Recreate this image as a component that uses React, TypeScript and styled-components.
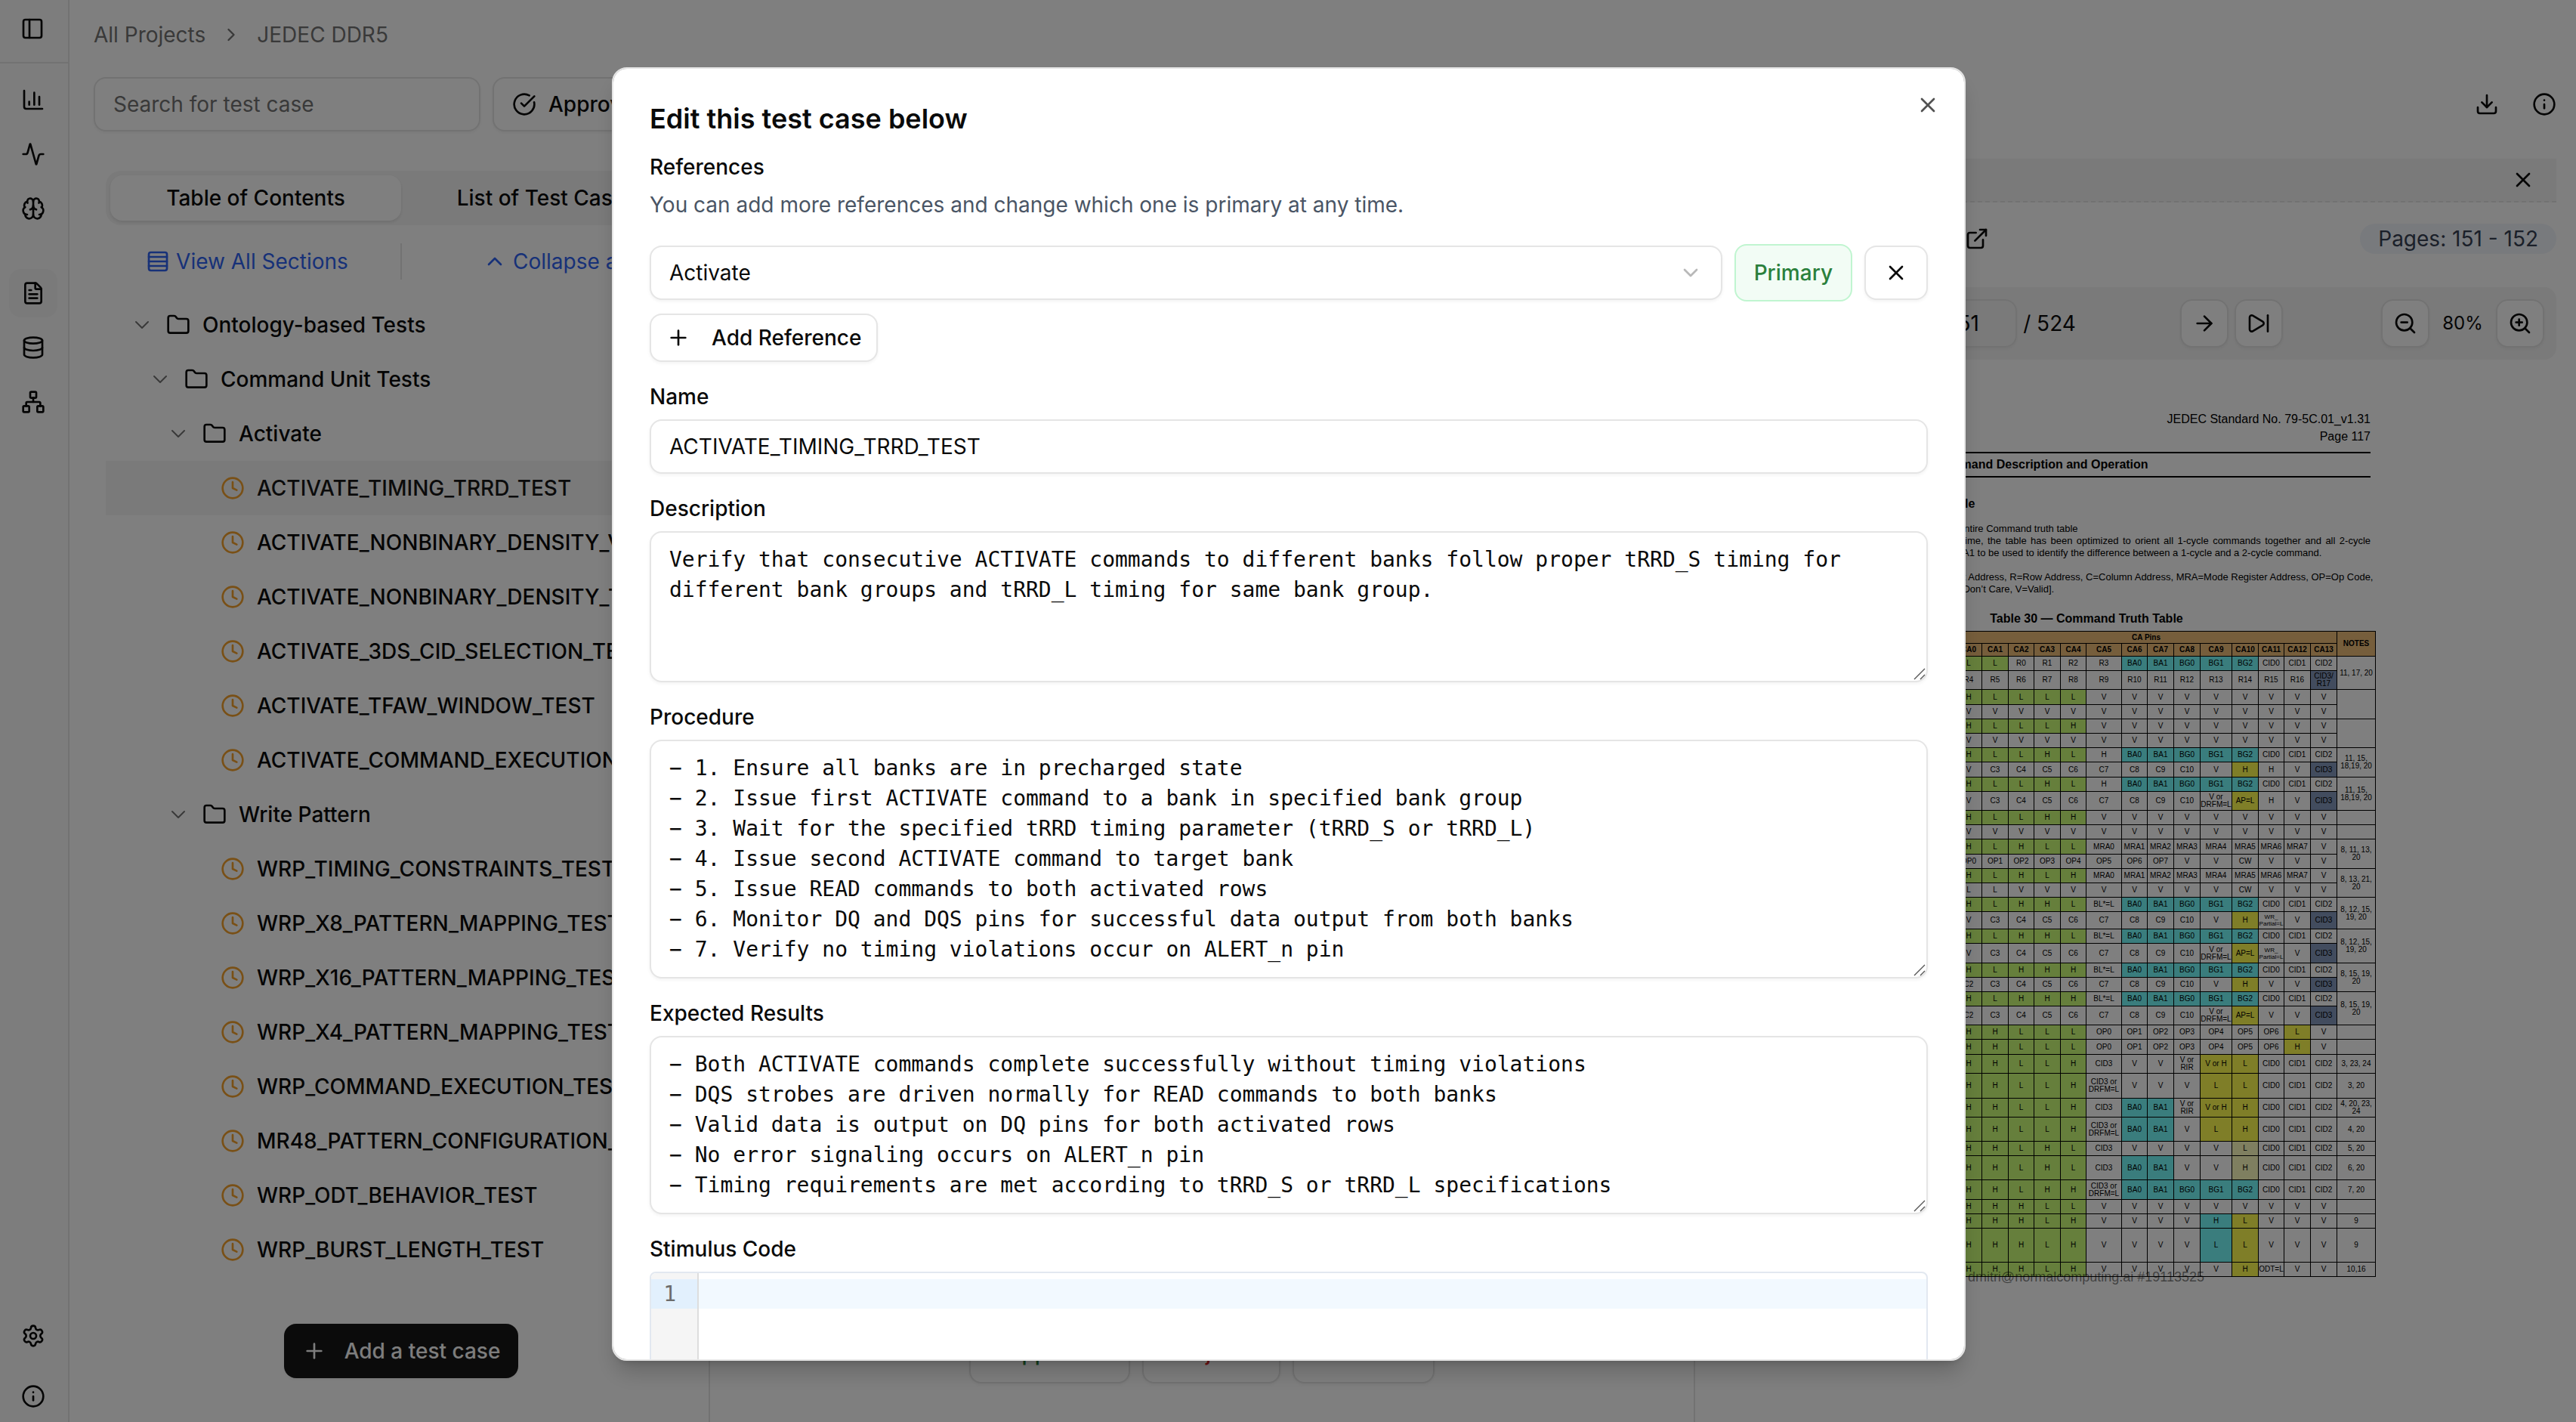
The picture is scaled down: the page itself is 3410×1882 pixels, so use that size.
import React from 'react';
import styled, { createGlobalStyle, css } from 'styled-components';
import {
  Activity,
  ArrowLeft,
  ArrowRight,
  Brain,
  ChartColumn,
  ChevronDown,
  ChevronRight,
  ChevronUp,
  CircleCheckBig,
  Clock,
  Database,
  Download,
  ExternalLink,
  FileText,
  Folder,
  Info,
  Network,
  PanelLeft,
  Plus,
  Rows4,
  Settings,
  SkipBack,
  SkipForward,
  X,
  ZoomIn,
  ZoomOut,
} from 'lucide-react';

const sans = "Inter, 'Liberation Sans', sans-serif";
const mono = "'DejaVu Sans Mono', monospace";
const arial = "'Liberation Sans', Arial, sans-serif";

const GlobalStyle = createGlobalStyle`
  *, *::before, *::after { box-sizing: border-box; }
  body { margin: 0; background: #fff; color: #0a0a0a; font: 400 28px/40px ${sans}; }
  button, input, select, textarea { font: inherit; color: inherit; margin: 0; }
  button { cursor: pointer; }
  a { color: inherit; text-decoration: none; }
  p, h1, h2, h3, ul { margin: 0; padding: 0; }
  svg { flex: none; }
`;

const border = '2px solid #e5e5e5';
const softShadow = '0 2px 4px rgba(0, 0, 0, 0.05)';

/* ---------- application shell ---------- */

const Shell = styled.div`
  display: flex;
  height: 100vh;
  overflow: hidden;
`;

const Sidebar = styled.nav`
  display: flex;
  flex-direction: column;
  flex: none;
  width: 92px;
  background: #fafafa;
  border-right: ${border};
`;

const SidebarTop = styled.div`
  display: flex;
  align-items: center;
  justify-content: center;
  height: 84px;
  padding: 0 4px 6px 0;
  border-bottom: ${border};
`;

const SidebarGroup = styled.div<{ $gap?: number }>`
  display: flex;
  flex-direction: column;
  align-items: center;
  gap: ${(p) => p.$gap ?? 8}px;
`;

const SidebarBody = styled.div`
  display: flex;
  flex-direction: column;
  flex: 1;
  gap: 48px;
  padding: 16px 2px 2px 0;
`;

const SidebarFoot = styled(SidebarGroup)`
  margin-top: auto;
`;

const IconButton = styled.button<{ $active?: boolean; $size?: number }>`
  display: flex;
  align-items: center;
  justify-content: center;
  width: ${(p) => p.$size ?? 64}px;
  height: ${(p) => p.$size ?? 64}px;
  padding: 0;
  border: 0;
  border-radius: 16px;
  background: ${(p) => (p.$active ? '#f4f4f5' : 'transparent')};
`;

const Main = styled.main`
  display: flex;
  flex-direction: column;
  flex: 1;
  min-width: 0;
`;

const Breadcrumb = styled.nav`
  display: flex;
  align-items: center;
  gap: 20px;
  padding: 26px 32px 0;
  color: #737373;
`;

const TopBar = styled.div`
  display: flex;
  align-items: center;
  gap: 16px;
  padding: 36px 26px 16px 32px;
`;

const SearchInput = styled.input`
  width: 512px;
  height: 72px;
  padding: 0 24px;
  border: ${border};
  border-radius: 16px;
  background: transparent;
  box-shadow: ${softShadow};
  &::placeholder { color: #737373; opacity: 1; }
`;

const TopActions = styled.div`
  display: flex;
  gap: 44px;
  margin-left: auto;
`;

type Tone = 'outline' | 'dark' | 'green' | 'red';

const Button = styled.button<{ $tone?: Tone; $gap?: number; $pad?: number; $height?: number }>`
  display: inline-flex;
  align-items: center;
  gap: ${(p) => p.$gap ?? 16}px;
  height: ${(p) => p.$height ?? 72}px;
  padding: 0 ${(p) => p.$pad ?? 24}px;
  border: ${border};
  border-radius: 16px;
  background: #fff;
  box-shadow: ${softShadow};
  font-weight: 500;
  white-space: nowrap;
  ${(p) => p.$tone === 'dark' && css`background: #171717; color: #fafafa; border: 0;`}
  ${(p) => p.$tone === 'green' && css`color: #2b803c;`}
  ${(p) => p.$tone === 'red' && css`color: #dc2626;`}
`;

const Columns = styled.div`
  display: grid;
  grid-template-columns: 848fr 1302fr 1168fr;
  flex: 1;
  min-height: 0;
`;

/* ---------- left column ---------- */

const Contents = styled.section`
  display: flex;
  flex-direction: column;
  min-width: 0;
  padding: 36px 16px 58px 48px;
  border-right: ${border};
`;

const Tabs = styled.div`
  display: grid;
  grid-template-columns: 1fr 1fr;
  height: 72px;
  padding: 6px;
  border-radius: 20px;
  background: #f5f5f5;
`;

const Tab = styled.button<{ $active?: boolean }>`
  border: 0;
  border-radius: 16px;
  background: ${(p) => (p.$active ? '#fff' : 'transparent')};
  box-shadow: ${(p) => (p.$active ? '0 2px 4px rgba(0, 0, 0, 0.1)' : 'none')};
  font-weight: 500;
`;

const TreeActions = styled.div`
  display: flex;
  height: 48px;
  margin: 24px 0;
`;

const TreeAction = styled.div<{ $last?: boolean }>`
  display: flex;
  align-items: center;
  justify-content: center;
  flex: 1;
  padding: ${(p) => (p.$last ? '0 0 0 16px' : '0 16px 0 0')};
  border-left: ${(p) => (p.$last ? border : 0)};
`;

const TextLink = styled.a`
  display: flex;
  align-items: center;
  gap: 8px;
  color: #2f63f0;
`;

const Tree = styled.ul`
  flex: 1;
  min-height: 0;
  list-style: none;
`;

const TreeRow = styled.li<{ $level: number; $active?: boolean }>`
  display: flex;
  align-items: center;
  gap: 16px;
  height: 72px;
  padding-left: ${(p) => 32 + p.$level * 24}px;
  background: ${(p) => (p.$active ? '#f5f5f5' : 'transparent')};
  color: ${(p) => (p.$active ? '#171717' : '#0a0a0a')};
  font-weight: 500;
  white-space: nowrap;
`;

const TreeToggle = styled.span`
  display: flex;
  flex: none;
  width: 32px;
  color: #737373;
`;

const ContentsFoot = styled.div`
  display: flex;
  justify-content: center;
`;

/* ---------- middle column ---------- */

const Detail = styled.section`
  display: flex;
  align-items: flex-end;
  justify-content: center;
  gap: 16px;
  padding-bottom: 51px;
`;

/* ---------- right column ---------- */

const Viewer = styled.section`
  min-width: 0;
  padding: 20px 26px 0 24px;
  border-left: ${border};
`;

const ViewerBar = styled.div`
  display: flex;
  align-items: center;
  justify-content: flex-end;
  height: 58px;
  padding-right: 28px;
  border-bottom: 2px dashed #e5e5e5;
  background: #f5f5f5;
`;

const ViewerMeta = styled.div`
  display: flex;
  align-items: center;
  justify-content: flex-end;
  height: 112px;
  padding-bottom: 16px;
`;

const SourceLink = styled.a`
  display: flex;
  width: 523px;
`;

const Pill = styled.span`
  padding: 0 24px;
  border-radius: 20px;
  background: #f0f4fb;
  color: #364153;
`;

const ViewerTools = styled.div`
  display: flex;
  align-items: center;
  gap: 130px;
  height: 96px;
  padding: 0 16px;
  border-radius: 16px;
  background: #f5f5f5;
`;

const PageNav = styled.div`
  display: flex;
  flex: 1;
  justify-content: space-between;
`;

const ToolGroup = styled.div`
  display: flex;
  align-items: center;
  gap: 8px;
`;

const ToolButton = styled(IconButton)`
  border: ${border};
  background: #fff;
  box-shadow: ${softShadow};
`;

const PageInput = styled.input`
  width: 112px;
  height: 64px;
  padding: 0 20px;
  border: ${border};
  border-radius: 16px;
  background: transparent;
  box-shadow: ${softShadow};
`;

const ZoomLevel = styled.span`
  width: 72px;
  font-size: 24px;
  text-align: center;
`;

/* ---------- PDF page ---------- */

const Sheet = styled.article`
  position: relative;
  width: 980px;
  margin: 0 auto;
  padding-top: 67px;
  background: #fff;
  color: #000;
  font: 400 16px/23px ${arial};
`;

const SheetText = styled.div`
  padding: 0 178px 0 84px;
`;

const SheetHead = styled.div`
  text-align: right;
`;

const SheetTitle = styled.h2`
  display: flex;
  gap: 20px;
  margin: 9px 0 23px;
  border: solid #000;
  border-width: 2px 0;
  font-size: 16px;
  line-height: 30px;
`;

const SheetHeading = styled.h3`
  margin-bottom: 14px;
  font-size: 16px;
`;

const SheetPara = styled.p`
  margin: 0 0 16px -4px;
  font-size: 13px;
  line-height: 16px;
  white-space: nowrap;
`;

const SheetLine = styled.span<{ $justify?: boolean }>`
  display: block;
  ${(p) => p.$justify && css`white-space: normal; text-align-last: justify;`}
`;

const PinTable = styled.table`
  width: 766px;
  margin-left: 43px;
  border-collapse: collapse;
  table-layout: fixed;
  font-size: 10px;
  line-height: 10px;
  text-align: center;
`;

const Caption = styled.caption`
  padding: 3px 0 5px;
  font-size: 16px;
  font-weight: 700;
  line-height: 23px;
`;

const fills = {
  g: '#ccff78',
  c: '#74fbfb',
  y: '#fffc50',
  p: '#ffffc0',
  n: '#8498bc',
  o: '#ecbc78',
};
type Fill = keyof typeof fills;

const PinCell = styled.td<{ $fill?: Fill; $tiny?: boolean }>`
  padding: 0;
  border: 1px solid #000;
  background: ${(p) => (p.$fill ? fills[p.$fill] : 'transparent')};
  white-space: pre;
  ${(p) => p.$tiny && css`font-size: 8px; line-height: 9px;`}
`;

const PinHead = styled.th`
  padding: 0;
  border: 1px solid #000;
  background: ${fills.o};
`;

const Watermark = styled.div`
  position: absolute;
  right: 398px;
  bottom: -12px;
  color: rgba(0, 0, 0, 0.5);
  font-size: 18px;
`;

/* ---------- dialog ---------- */

const Backdrop = styled.div`
  position: fixed;
  inset: 0;
  display: flex;
  justify-content: center;
  padding: 89px 0 81px 2px;
  background: rgba(0, 0, 0, 0.5);
`;

const Dialog = styled.div`
  position: relative;
  width: 100%;
  max-width: 1792px;
  padding: 48px;
  overflow-y: auto;
  scrollbar-width: none;
  border: ${border};
  border-radius: 20px;
  background: #fff;
  box-shadow: 0 20px 30px -6px rgba(0, 0, 0, 0.2), 0 8px 12px -8px rgba(0, 0, 0, 0.2);
`;

const DialogClose = styled.button`
  position: absolute;
  top: 32px;
  right: 32px;
  display: flex;
  padding: 0;
  border: 0;
  background: none;
  opacity: 0.7;
`;

const DialogTitle = styled.h1`
  font-size: 36px;
  font-weight: 600;
  line-height: 36px;
`;

const Form = styled.form`
  display: flex;
  flex-direction: column;
  gap: 32px;
  margin-top: 32px;
`;

const Field = styled.div`
  display: flex;
  flex-direction: column;
  gap: 16px;
`;

const Label = styled.label`
  font-weight: 500;
  line-height: 28px;
`;

const Hint = styled.p`
  color: #4a5565;
`;

const References = styled.div`
  display: flex;
  flex-direction: column;
  align-items: flex-start;
  gap: 16px;
`;

const ReferenceRow = styled.div`
  display: flex;
  align-items: center;
  gap: 16px;
  width: 100%;
`;

const control = css`
  width: 100%;
  border: ${border};
  border-radius: 16px;
  background: #fff;
  box-shadow: ${softShadow};
  outline: none;
`;

const SelectWrap = styled.div`
  position: relative;
  flex: 1;
`;

const Select = styled.select`
  ${control}
  display: block;
  appearance: none;
  height: 72px;
  padding: 0 24px;
`;

const SelectArrow = styled(ChevronDown)`
  position: absolute;
  top: 20px;
  right: 26px;
  color: #737373;
  opacity: 0.5;
  pointer-events: none;
`;

const PrimaryBadge = styled.span`
  padding: 16px 24px;
  border: 2px solid #c0f5d0;
  border-radius: 16px;
  background: #f2fcf5;
  color: #2b803c;
  font-weight: 500;
`;

const TextInput = styled.input`
  ${control}
  height: 72px;
  padding: 0 24px;
`;

const AreaWrap = styled.div`
  position: relative;
  display: flex;
`;

const Area = styled.textarea<{ $minHeight?: number }>`
  ${control}
  display: block;
  min-height: ${(p) => p.$minHeight ?? 0}px;
  padding: 16px 24px;
  resize: none;
  overflow: hidden;
  font-family: ${mono};
`;

const Grip = styled.svg`
  position: absolute;
  right: 3px;
  bottom: 3px;
  width: 16px;
  height: 16px;
  pointer-events: none;
`;

const Editor = styled.div`
  display: grid;
  grid-template-columns: 63px 1fr;
  height: 400px;
  border: 2px solid #e2e8f0;
  border-radius: 8px;
  overflow: hidden;
  font-family: ${mono};
`;

const Gutter = styled.div`
  padding-top: 8px;
  border-right: 2px solid #ddd;
  background: #f5f5f5;
  color: #6c6c6c;
  line-height: 39px;
  text-align: right;
`;

const GutterLine = styled.div`
  padding-right: 28px;
  background: #e2f0fd;
`;

const CodeInput = styled.textarea`
  width: 100%;
  margin-top: 8px;
  padding: 0 12px;
  border: 0;
  outline: none;
  resize: none;
  background: linear-gradient(#f2f9ff, #f2f9ff) 0 0 / 100% 39px no-repeat;
  line-height: 39px;
`;

/* ---------- data ---------- */

type Node = { level: number; label: string; folder?: boolean; active?: boolean };

const tree: Node[] = [
  { level: 0, label: 'Ontology-based Tests', folder: true },
  { level: 1, label: 'Command Unit Tests', folder: true },
  { level: 2, label: 'Activate', folder: true },
  { level: 3, label: 'ACTIVATE_TIMING_TRRD_TEST', active: true },
  { level: 3, label: 'ACTIVATE_NONBINARY_DENSITY_V_TEST' },
  { level: 3, label: 'ACTIVATE_NONBINARY_DENSITY_TEST' },
  { level: 3, label: 'ACTIVATE_3DS_CID_SELECTION_TEST' },
  { level: 3, label: 'ACTIVATE_TFAW_WINDOW_TEST' },
  { level: 3, label: 'ACTIVATE_COMMAND_EXECUTION_TEST' },
  { level: 2, label: 'Write Pattern', folder: true },
  { level: 3, label: 'WRP_TIMING_CONSTRAINTS_TEST' },
  { level: 3, label: 'WRP_X8_PATTERN_MAPPING_TEST' },
  { level: 3, label: 'WRP_X16_PATTERN_MAPPING_TEST' },
  { level: 3, label: 'WRP_X4_PATTERN_MAPPING_TEST' },
  { level: 3, label: 'WRP_COMMAND_EXECUTION_TEST' },
  { level: 3, label: 'MR48_PATTERN_CONFIGURATION_TEST' },
  { level: 3, label: 'WRP_ODT_BEHAVIOR_TEST' },
  { level: 3, label: 'WRP_BURST_LENGTH_TEST' },
];

const description =
  'Verify that consecutive ACTIVATE commands to different banks follow proper tRRD_S timing for different bank groups and tRRD_L timing for same bank group.';

const procedure = [
  '− 1. Ensure all banks are in precharged state',
  '− 2. Issue first ACTIVATE command to a bank in specified bank group',
  '− 3. Wait for the specified tRRD timing parameter (tRRD_S or tRRD_L)',
  '− 4. Issue second ACTIVATE command to target bank',
  '− 5. Issue READ commands to both activated rows',
  '− 6. Monitor DQ and DQS pins for successful data output from both banks',
  '− 7. Verify no timing violations occur on ALERT_n pin',
];

const expected = [
  '− Both ACTIVATE commands complete successfully without timing violations',
  '− DQS strobes are driven normally for READ commands to both banks',
  '− Valid data is output on DQ pins for both activated rows',
  '− No error signaling occurs on ALERT_n pin',
  '− Timing requirements are met according to tRRD_S or tRRD_L specifications',
];

const columnWidths = [120, 54, 35, 35, 35, 34, 35, 34, 47, 34, 35, 35, 42, 35, 34, 35, 35, 51];

// Cells are separated by "|"; a trailing "~x" picks the fill, "/" breaks the line.
const V9 = 'V|V|V|V|V|V|V|V|V';
const V14 = 'V|V|V|V|V|' + V9;
const bank = 'BA0~c|BA1~c|BG0~c|BG1~c|BG2~c|CID0|CID1|CID2';
const mra = 'MRA0|MRA1|MRA2|MRA3|MRA4|MRA5|MRA6|MRA7|V';
const cols = 'C3|C4|C5|C6|C7|C8|C9|C10';
const cid = 'CID0|CID1|CID2';
const lead = (s: string) => s.split('').map((c) => c + '~g').join('|') + '|';

type PinRow = { h: number; name: string; cells: string; note?: string; span?: number };

const pinRows: PinRow[] = [
  { h: 19, name: 'Activate', cells: 'L~g|L~g|R0|R1|R2|R3|' + bank, note: '11, 17, 20', span: 2 },
  { h: 25, name: '', cells: 'R4|R5|R6|R7|R8|R9|R10|R11|R12|R13|R14|R15|R16|CID3//R17~n' },
  { h: 20, name: 'RFU', cells: lead('HLLLL') + V9, note: '', span: 2 },
  { h: 19, name: '', cells: V14 },
  { h: 19, name: 'RFU', cells: lead('HLLLH') + V9, note: '', span: 2 },
  { h: 19, name: '', cells: V14 },
  { h: 19, name: 'Write Pattern', cells: lead('HLLHL') + 'H|' + bank, note: '11, 15,/18,19, 20', span: 2 },
  { h: 20, name: '', cells: 'V|' + cols + '|V|H~y|H|V|CID3~n' },
  { h: 19, name: 'Write Pattern w/ AP', cells: lead('HLLHL') + 'H|' + bank, note: '11, 15,/18,19, 20', span: 2 },
  { h: 25, name: '', cells: 'V|' + cols + '|V or/DRFM=L|AP=L~y|H|V|CID3~n' },
  { h: 19, name: 'RFU', cells: lead('HLLHH') + V9, note: '' },
  { h: 19, name: '', cells: V14, note: '' },
  { h: 20, name: 'Mode Register Write', cells: lead('HLHLL') + mra, note: '8, 11, 13,/20', span: 2 },
  { h: 19, name: '', cells: 'OP0|OP1|OP2|OP3|OP4|OP5|OP6|OP7|V|V|CW|V|V|V' },
  { h: 19, name: 'Mode Register Read', cells: lead('HLHLH') + mra, note: '8, 13, 21,/20', span: 2 },
  { h: 19, name: '', cells: 'L|L|V|V|V|V|V|V|V|V|CW|V|V|V' },
  { h: 19, name: 'Write', cells: lead('HLHHL') + 'BL*=L|' + bank, note: '8, 12, 15,/19, 20', span: 2 },
  { h: 23, name: '', cells: 'V|' + cols + '|V|H~y|WR_/Partial=L~t|V|CID3~n' },
  { h: 19, name: 'Write w/ AP', cells: lead('HLHHL') + 'BL*=L|' + bank, note: '8, 12, 15,/19, 20', span: 2 },
  { h: 26, name: '', cells: 'V|' + cols + '|V or/DRFM=L|AP=L~y|WR_/Partial=L~t|V|CID3~n' },
  { h: 19, name: 'Read', cells: lead('HLHHH') + 'BL*=L|' + bank, note: '8, 15, 19,/20', span: 2 },
  { h: 19, name: '', cells: 'C2|' + cols + '|V|H~y|V|V|CID3~n' },
  { h: 19, name: 'Read w/ AP', cells: lead('HLHHH') + 'BL*=L|' + bank, note: '8, 15, 19,/20', span: 2 },
  { h: 25, name: '', cells: 'C2|' + cols + '|V or/DRFM=L|AP=L~y|V|V|CID3~n' },
  { h: 19, name: 'VrefCA', cells: lead('HHLLL') + 'OP0|OP1|OP2|OP3|OP4|OP5|OP6|L~y|V', note: '' },
  { h: 20, name: 'VrefCS', cells: lead('HHLLL') + 'OP0|OP1|OP2|OP3|OP4|OP5|OP6|H~y|V', note: '' },
  { h: 25, name: 'Refresh All', cells: lead('HHLLH') + 'CID3|V|V|V or/RIR|V or H~y|L~y|' + cid, note: '3, 23, 24' },
  { h: 33, name: 'RFM All', cells: lead('HHLLH') + 'CID3 or/DRFM=L|V|V|V|L~y|L~y|' + cid, note: '3, 20' },
  { h: 25, name: 'Refresh SB', cells: lead('HHLLH') + 'CID3|BA0~c|BA1~c|V or/RIR|V or H~y|H~y|' + cid, note: '4, 20, 23,/24' },
  { h: 32, name: 'RFM SB', cells: lead('HHLLH') + 'CID3 or/DRFM=L|BA0~c|BA1~c|V|L~y|H~y|' + cid, note: '4, 20' },
  { h: 19, name: 'Precharge All', cells: lead('HHLHL') + 'CID3|V|V|V|V|L~p|' + cid, note: '5, 20' },
  { h: 32, name: 'Precharge SB', cells: lead('HHLHL') + 'CID3|BA0~c|BA1~c|V|V|H~p|' + cid, note: '6, 20' },
  { h: 26, name: 'Precharge', cells: lead('HHLHH') + 'CID3 or/DRFM=L|' + bank, note: '7, 20' },
  { h: 19, name: 'RFU', cells: lead('HHHLL') + V9, note: '' },
  { h: 19, name: 'Self Refresh Entry', cells: lead('HHHLH') + 'V|V|V|V|H~c|L~y|V|V|V', note: '9' },
  { h: 45, name: 'Self Refresh Entry', cells: lead('HHHLH') + 'V|V|V|V|L~c|L~y|V|V|V', note: '9' },
  { h: 19, name: 'Power Down Entry', cells: lead('HHHLH') + 'V|V|V|V|V|H~y|ODT=L|V|V', note: '10,16' },
];

const breakLines = (s: string) => (s.includes('//') ? s.replace('//', '/\n') : s.replace('/', '\n'));

/* ---------- parts ---------- */

function PinTableView() {
  return (
    <PinTable>
      <Caption>Table 30 — Command Truth Table</Caption>
      <colgroup>
        {columnWidths.map((w, i) => (
          <col key={i} style={{ width: w }} />
        ))}
      </colgroup>
      <thead>
        <tr style={{ height: 16 }}>
          <PinHead rowSpan={2}>Function</PinHead>
          <PinHead rowSpan={2}>Abbr.</PinHead>
          <PinHead rowSpan={2}>CS_n</PinHead>
          <PinHead colSpan={14}>CA Pins</PinHead>
          <PinHead rowSpan={2}>NOTES</PinHead>
        </tr>
        <tr style={{ height: 17 }}>
          {Array.from({ length: 14 }, (_, i) => (
            <PinHead key={i}>CA{i}</PinHead>
          ))}
        </tr>
      </thead>
      <tbody>
        {pinRows.map((row, r) => (
          <tr key={r} style={{ height: row.h }}>
            <PinCell>{row.name}</PinCell>
            <PinCell />
            <PinCell>{row.name ? 'L' : 'H'}</PinCell>
            {row.cells.split('|').map((cell, c) => {
              const [text, flag] = cell.split('~');
              return (
                <PinCell key={c} $fill={flag && flag !== 't' ? (flag as Fill) : undefined} $tiny={flag === 't'}>
                  {breakLines(text)}
                </PinCell>
              );
            })}
            {row.note !== undefined && <PinCell rowSpan={row.span ?? 1}>{breakLines(row.note)}</PinCell>}
          </tr>
        ))}
      </tbody>
    </PinTable>
  );
}

function AreaField({ id, label, value, rows, minHeight }: {
  id: string;
  label: string;
  value: string;
  rows: number;
  minHeight?: number;
}) {
  return (
    <Field>
      <Label htmlFor={id}>{label}</Label>
      <AreaWrap>
        <Area id={id} rows={rows} defaultValue={value} $minHeight={minHeight} spellCheck={false} />
        <Grip viewBox="0 0 16 16" fill="none" stroke="#555" strokeWidth="1.4">
          <path d="M1 15 15 1M9 15l6-6" />
        </Grip>
      </AreaWrap>
    </Field>
  );
}

export default function App() {
  return (
    <>
      <GlobalStyle />
      <Shell>
        <Sidebar aria-label="Primary">
          <SidebarTop>
            <IconButton aria-label="Toggle sidebar"><PanelLeft size={32} /></IconButton>
          </SidebarTop>
          <SidebarBody>
            <SidebarGroup>
              <IconButton aria-label="Dashboard"><ChartColumn size={32} /></IconButton>
              <IconButton aria-label="Activity"><Activity size={32} /></IconButton>
              <IconButton aria-label="Models"><Brain size={32} /></IconButton>
            </SidebarGroup>
            <SidebarGroup>
              <IconButton aria-label="Test plan" $active><FileText size={32} /></IconButton>
              <IconButton aria-label="Data"><Database size={32} /></IconButton>
              <IconButton aria-label="Graph"><Network size={32} /></IconButton>
            </SidebarGroup>
            <SidebarFoot $gap={16}>
              <IconButton aria-label="Settings"><Settings size={32} /></IconButton>
              <IconButton aria-label="About"><Info size={32} /></IconButton>
            </SidebarFoot>
          </SidebarBody>
        </Sidebar>

        <Main>
          <Breadcrumb aria-label="Breadcrumb">
            <a href="#projects">All Projects</a>
            <ChevronRight size={28} />
            <a href="#ddr5">JEDEC DDR5</a>
          </Breadcrumb>

          <TopBar>
            <SearchInput type="search" placeholder="Search for test case" aria-label="Search for test case" />
            <Button><CircleCheckBig size={32} />Approve All</Button>
            <TopActions>
              <IconButton $size={32} aria-label="Download"><Download size={32} /></IconButton>
              <IconButton $size={32} aria-label="Information"><Info size={32} /></IconButton>
            </TopActions>
          </TopBar>

          <Columns>
            <Contents>
              <Tabs role="tablist">
                <Tab role="tab" aria-selected $active>Table of Contents</Tab>
                <Tab role="tab">List of Test Cases</Tab>
              </Tabs>
              <TreeActions>
                <TreeAction>
                  <TextLink href="#sections"><Rows4 size={32} />View All Sections</TextLink>
                </TreeAction>
                <TreeAction $last>
                  <TextLink href="#collapse"><ChevronUp size={32} />Collapse all</TextLink>
                </TreeAction>
              </TreeActions>
              <Tree>
                {tree.map((node) => (
                  <TreeRow key={node.label} $level={node.level} $active={node.active}>
                    <TreeToggle>{node.folder && <ChevronDown size={32} strokeWidth={1.5} />}</TreeToggle>
                    {node.folder ? <Folder size={32} /> : <Clock size={32} color="#f2a02c" />}
                    {node.label}
                  </TreeRow>
                ))}
              </Tree>
              <ContentsFoot>
                <Button $tone="dark" $gap={24}><Plus size={32} />Add a test case</Button>
              </ContentsFoot>
            </Contents>

            <Detail>
              <Button $tone="green" $pad={48} $height={80}>Approve</Button>
              <Button $tone="red" $pad={48} $height={80}>Reject</Button>
              <Button $pad={48} $height={80}>Revise</Button>
            </Detail>

            <Viewer>
              <ViewerBar>
                <IconButton $size={32} aria-label="Close viewer"><X size={32} /></IconButton>
              </ViewerBar>
              <ViewerMeta>
                <SourceLink href="#source" aria-label="Open source"><ExternalLink size={32} /></SourceLink>
                <Pill>Pages: 151 - 152</Pill>
              </ViewerMeta>
              <ViewerTools>
                <PageNav>
                  <ToolGroup>
                    <ToolButton aria-label="First page"><SkipBack size={32} /></ToolButton>
                    <ToolButton aria-label="Previous page"><ArrowLeft size={32} /></ToolButton>
                  </ToolGroup>
                  <ToolGroup>
                    <PageInput defaultValue="151" aria-label="Page" />
                    <span>/ 524</span>
                  </ToolGroup>
                  <ToolGroup>
                    <ToolButton aria-label="Next page"><ArrowRight size={32} /></ToolButton>
                    <ToolButton aria-label="Last page"><SkipForward size={32} /></ToolButton>
                  </ToolGroup>
                </PageNav>
                <ToolGroup>
                  <ToolButton aria-label="Zoom out"><ZoomOut size={32} /></ToolButton>
                  <ZoomLevel>80%</ZoomLevel>
                  <ToolButton aria-label="Zoom in"><ZoomIn size={32} /></ToolButton>
                </ToolGroup>
              </ViewerTools>
              <Sheet>
                <SheetText>
                  <SheetHead>
                    <div>JEDEC Standard No. 79-5C.01_v1.31</div>
                    <div>Page 117</div>
                  </SheetHead>
                  <SheetTitle><span>4</span>DDR5 SDRAM Command Description and Operation</SheetTitle>
                  <SheetHeading>4.1 Command Truth Table</SheetHeading>
                  <SheetPara>
                    <SheetLine>Notes 1, 2 and 13 apply to the entire Command truth table</SheetLine>
                    <SheetLine $justify>
                      To improve command decode time, the table has been optimized to orient all 1-cycle commands together and all 2-cycle
                    </SheetLine>
                    <SheetLine>
                      commands together; allowing CA1 to be used to identify the difference between a 1-cycle and a 2-cycle command.
                    </SheetLine>
                  </SheetPara>
                  <SheetPara>
                    <SheetLine>
                      [BG=Bank Group, and BA=Bank Address, R=Row Address, C=Column Address, MRA=Mode Register Address, OP=Op Code,
                    </SheetLine>
                    <SheetLine>CID=Chip ID, CW = Control, X=Don’t Care, V=Valid].</SheetLine>
                  </SheetPara>
                </SheetText>
                <PinTableView />
                <Watermark>dmitri@normalcomputing.ai #19113525</Watermark>
              </Sheet>
            </Viewer>
          </Columns>
        </Main>
      </Shell>

      <Backdrop>
        <Dialog role="dialog" aria-modal="true" aria-labelledby="dialog-title">
          <DialogClose type="button" aria-label="Close"><X size={32} /></DialogClose>
          <DialogTitle id="dialog-title">Edit this test case below</DialogTitle>
          <Form onSubmit={(e) => e.preventDefault()}>
            <Field>
              <Label htmlFor="reference">References</Label>
              <Hint>You can add more references and change which one is primary at any time.</Hint>
            </Field>
            <References>
              <ReferenceRow>
                <SelectWrap>
                  <Select id="reference" defaultValue="Activate">
                    <option>Activate</option>
                    <option>Write Pattern</option>
                  </Select>
                  <SelectArrow size={32} />
                </SelectWrap>
                <PrimaryBadge>Primary</PrimaryBadge>
                <Button type="button" aria-label="Remove reference"><X size={32} /></Button>
              </ReferenceRow>
              <Button type="button" $gap={28} $pad={20} $height={64}><Plus size={32} />Add Reference</Button>
            </References>
            <Field>
              <Label htmlFor="name">Name</Label>
              <TextInput id="name" defaultValue="ACTIVATE_TIMING_TRRD_TEST" />
            </Field>
            <AreaField id="description" label="Description" value={description} rows={2} minHeight={200} />
            <AreaField id="procedure" label="Procedure" value={procedure.join('\n')} rows={7} />
            <AreaField id="expected" label="Expected Results" value={expected.join('\n')} rows={5} />
            <Field>
              <Label htmlFor="stimulus">Stimulus Code</Label>
              <Editor>
                <Gutter><GutterLine>1</GutterLine></Gutter>
                <CodeInput id="stimulus" spellCheck={false} />
              </Editor>
            </Field>
          </Form>
        </Dialog>
      </Backdrop>
    </>
  );
}
